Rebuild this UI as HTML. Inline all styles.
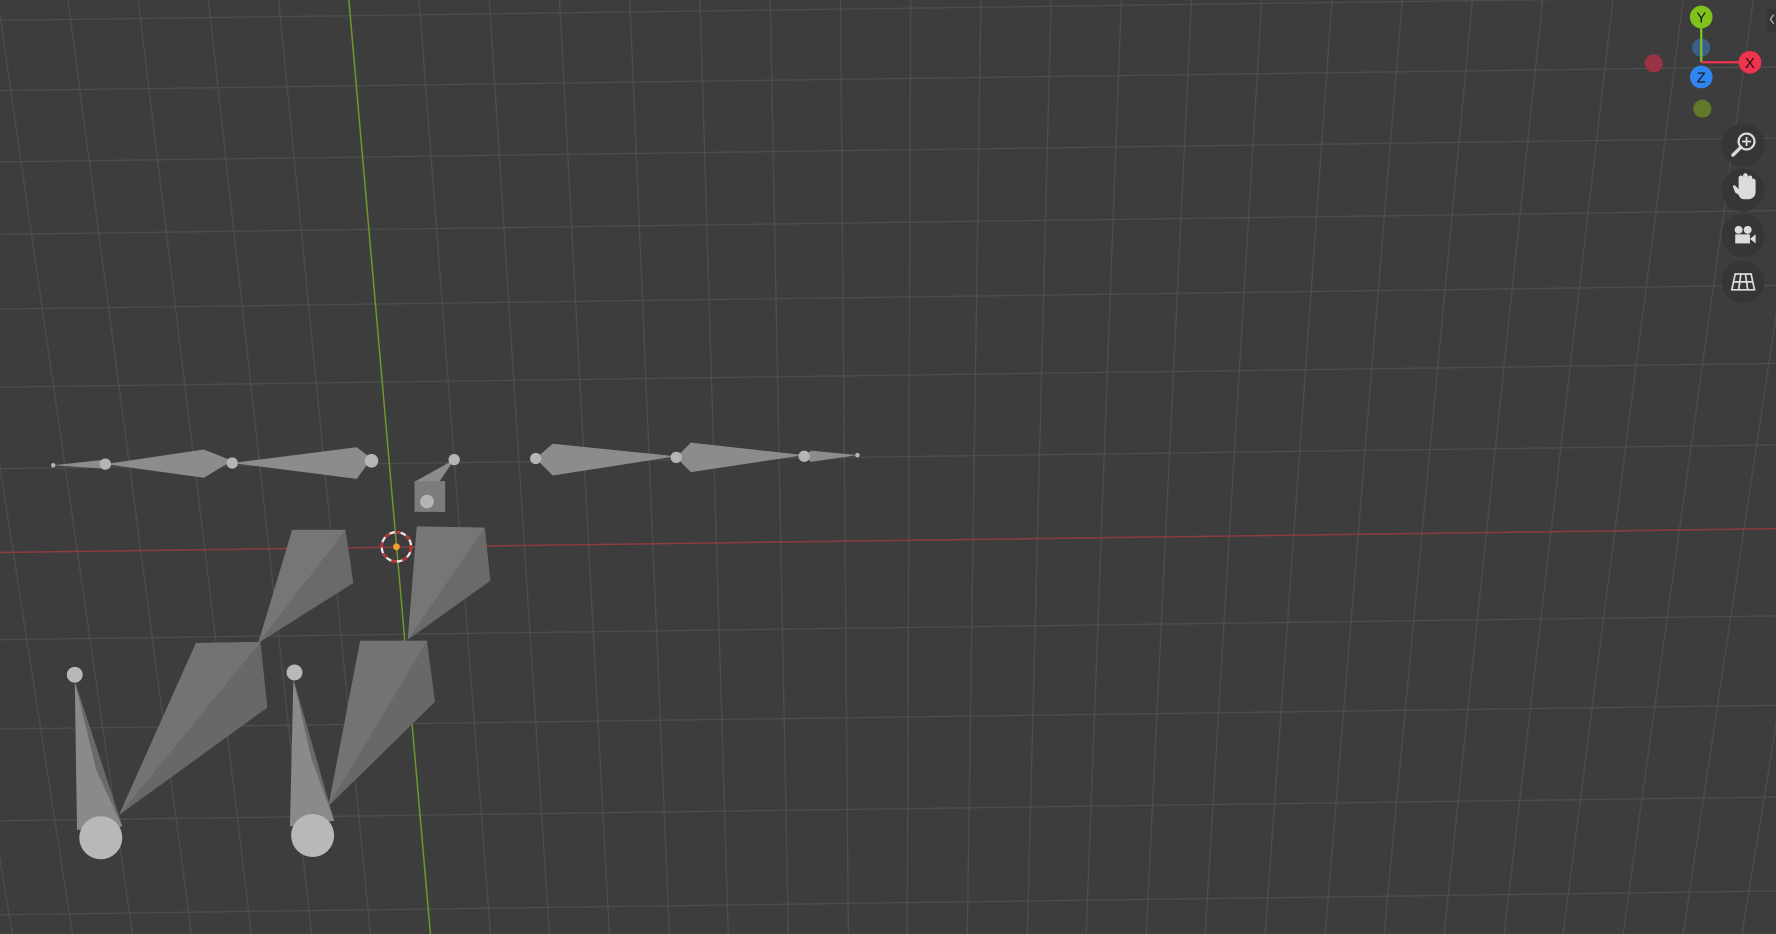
<!DOCTYPE html>
<html><head><meta charset="utf-8"><style>
html,body{margin:0;padding:0;background:#3d3d3d;overflow:hidden}
svg{display:block}
</style></head><body>
<svg width="1776" height="934" viewBox="0 0 1568 825" preserveAspectRatio="none" xmlns="http://www.w3.org/2000/svg">
<rect width="1568" height="825" fill="#3d3d3d"/>
<g stroke="#4d4d4d" stroke-width="1.2">
<line x1="-126" y1="0" x2="11" y2="825"/>
<line x1="-64" y1="0" x2="64" y2="825"/>
<line x1="-2" y1="0" x2="117" y2="825"/>
<line x1="60" y1="0" x2="169" y2="825"/>
<line x1="122" y1="0" x2="222" y2="825"/>
<line x1="184" y1="0" x2="275" y2="825"/>
<line x1="246" y1="0" x2="327" y2="825"/>
<line x1="370" y1="0" x2="433" y2="825"/>
<line x1="432" y1="0" x2="485" y2="825"/>
<line x1="494" y1="0" x2="538" y2="825"/>
<line x1="556" y1="0" x2="591" y2="825"/>
<line x1="618" y1="0" x2="643" y2="825"/>
<line x1="680" y1="0" x2="696" y2="825"/>
<line x1="742" y1="0" x2="749" y2="825"/>
<line x1="804" y1="0" x2="801" y2="825"/>
<line x1="866" y1="0" x2="854" y2="825"/>
<line x1="928" y1="0" x2="907" y2="825"/>
<line x1="990" y1="0" x2="959" y2="825"/>
<line x1="1052" y1="0" x2="1012" y2="825"/>
<line x1="1114" y1="0" x2="1064" y2="825"/>
<line x1="1176" y1="0" x2="1117" y2="825"/>
<line x1="1238" y1="0" x2="1170" y2="825"/>
<line x1="1300" y1="0" x2="1222" y2="825"/>
<line x1="1362" y1="0" x2="1275" y2="825"/>
<line x1="1424" y1="0" x2="1328" y2="825"/>
<line x1="1486" y1="0" x2="1380" y2="825"/>
<line x1="1548" y1="0" x2="1433" y2="825"/>
<line x1="1610" y1="0" x2="1486" y2="825"/>
<line x1="1672" y1="0" x2="1538" y2="825"/>
<line x1="0" y1="18" x2="1568" y2="-3"/>
<line x1="0" y1="80" x2="1568" y2="59"/>
<line x1="0" y1="143" x2="1568" y2="122"/>
<line x1="0" y1="207" x2="1568" y2="186"/>
<line x1="0" y1="273" x2="1568" y2="252"/>
<line x1="0" y1="342" x2="1568" y2="321"/>
<line x1="0" y1="414" x2="1568" y2="393"/>
<line x1="0" y1="565" x2="1568" y2="544"/>
<line x1="0" y1="644" x2="1568" y2="623"/>
<line x1="0" y1="725" x2="1568" y2="704"/>
<line x1="0" y1="808" x2="1568" y2="787"/>
</g>
<line x1="0" y1="488" x2="1568" y2="467" stroke="#8e3b40" stroke-width="1.3"/>
<line x1="308" y1="0" x2="380" y2="825" stroke="#6c9a2a" stroke-width="1.3"/>
<g fill="#8c8c8c">
<polygon points="47,411 93,406 93,414"/>
<polygon points="93,410 180,397 205,407 180,422"/>
<polygon points="205,409 315,395 328,405 315,423"/>
<polygon points="473,405 488,392 597,403 488,420"/>
<polygon points="597,404 610,391 710,402 610,417"/>
<polygon points="710,403 716,398 757,402 716,408"/>
<polygon points="401,406 367,425 393,452 370,452"/>
<rect x="366" y="425" width="27" height="27" fill="#7c7c7c"/>
</g>
<g fill="#b5b5b5">
<circle cx="47" cy="411" r="2"/><circle cx="93" cy="410" r="5"/><circle cx="205" cy="409" r="5"/><circle cx="328" cy="407" r="6"/>
<circle cx="473" cy="405" r="5"/><circle cx="597" cy="404" r="5"/><circle cx="710" cy="403" r="5"/><circle cx="757" cy="402" r="2"/>
<circle cx="401" cy="406" r="5"/><circle cx="377" cy="443" r="6"/>
</g>
<g>
<polygon points="258,468 305,468 312,515 228,568" fill="#6a6a6a"/>
<polygon points="258,468 305,468 228,568" fill="#767676"/>
<polygon points="173,568 230,567 236,625 105,720" fill="#686868"/>
<polygon points="173,568 230,567 105,720" fill="#737373"/>
<polygon points="66,602 68,733 108,730" fill="#8a8a8a"/>
<polygon points="66,602 85,680 108,730" fill="#6a6a6a"/>
<circle cx="89" cy="740" r="19" fill="#b8b8b8"/>
<circle cx="66" cy="596" r="7" fill="#b8b8b8"/>
<polygon points="368,465 428,466 433,513 360,565" fill="#6a6a6a"/>
<polygon points="368,465 428,466 360,565" fill="#767676"/>
<polygon points="318,566 377,566 384,620 290,712" fill="#686868"/>
<polygon points="318,566 377,566 290,712" fill="#737373"/>
<polygon points="259,600 256,730 295,725" fill="#8a8a8a"/>
<polygon points="259,600 275,670 295,725" fill="#6a6a6a"/>
<circle cx="276" cy="738" r="19" fill="#b8b8b8"/>
<circle cx="260" cy="594" r="7" fill="#b8b8b8"/>
</g>
<circle cx="350" cy="483" r="13" fill="none" stroke="#e8e8e8" stroke-width="2"/>
<circle cx="350" cy="483" r="13" fill="none" stroke="#c03030" stroke-width="2" stroke-dasharray="5 5"/>
<circle cx="350" cy="483" r="3" fill="#f0a030"/>
<circle cx="1460" cy="56" r="8" fill="#9a3444"/>
<circle cx="1502" cy="42" r="8" fill="#3a5f8a"/>
<circle cx="1503" cy="96" r="8" fill="#607a2a"/>
<line x1="1502" y1="55" x2="1502" y2="15" stroke="#7fc21b" stroke-width="2"/>
<line x1="1502" y1="55" x2="1545" y2="55" stroke="#f0334f" stroke-width="2"/>
<g font-family="Liberation Sans, sans-serif" font-size="13" text-anchor="middle" fill="#111">
<circle cx="1502" cy="15" r="10" fill="#7fc21b"/><text x="1502" y="20">Y</text>
<circle cx="1545" cy="55" r="10" fill="#f0334f"/><text x="1545" y="60">X</text>
<circle cx="1502" cy="68" r="10" fill="#2f86f0"/><text x="1502" y="73">Z</text>
</g>
<g fill="#363636">
<circle cx="1539" cy="128" r="19"/><circle cx="1539" cy="168" r="19"/><circle cx="1539" cy="208" r="19"/><circle cx="1539" cy="249" r="19"/>
</g>
<g fill="#dcdcdc" stroke="#dcdcdc">
<circle cx="1542" cy="125" r="7" fill="none" stroke-width="2"/>
<path d="M1542 121v8M1538 125h8" stroke-width="1.6"/>
<line x1="1537" y1="130" x2="1530" y2="137" stroke-width="3" stroke-linecap="round"/>
<path d="M1532 170 l-2-5 q0-2 2-1 l3 3 v-10 q0-2 2-2 q2 0 2 2 v-2 q0-2 2-2 q2 0 2 2 v2 q0-2 2-2 q2 0 2 2 v2 q0-2 2-1 q1 1 1 2 v9 q0 6-6 7 h-4 q-4 0-5-4z" stroke="none"/>
<circle cx="1535" cy="203" r="3.5" stroke="none"/><circle cx="1543" cy="203" r="3.5" stroke="none"/>
<rect x="1532" y="207" width="13" height="8" stroke="none"/>
<polygon points="1545,211 1550,207 1550,215" stroke="none"/>
<path d="M1532 242h14l3 14h-20zM1531 249h17M1537 242l-2 14M1541 242l2 14" fill="none" stroke-width="1.5"/>
</g>
<rect x="1560" y="8" width="8" height="20" fill="#363636"/>
<path d="M1566 13l-3 4 3 4" fill="none" stroke="#aaa" stroke-width="1.2"/>
</svg>
</body></html>
